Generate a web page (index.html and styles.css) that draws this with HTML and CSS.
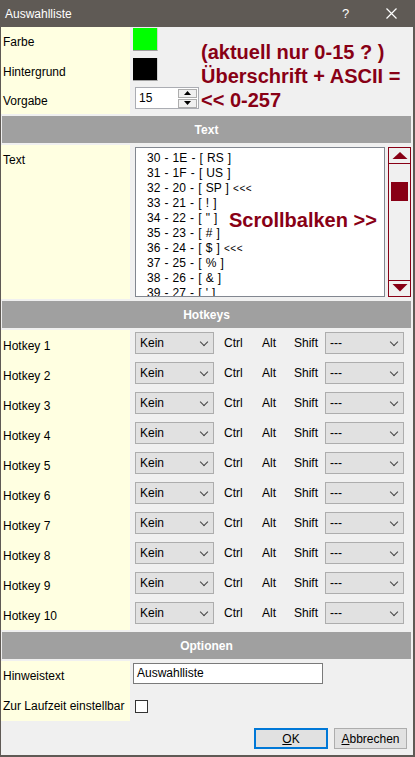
FILE: index.html
```html
<!DOCTYPE html>
<html>
<head>
<meta charset="utf-8">
<link rel="stylesheet" href="styles.css">
</head>
<body>
<div class="window">
  <div class="titlebar">
    <span class="title">Auswahlliste</span>
    <span class="help">?</span>
    <svg class="close" width="11" height="11" viewBox="0 0 11 11"><path d="M0.5 0.5 L10.5 10.5 M10.5 0.5 L0.5 10.5" stroke="#fff" stroke-width="1.2" fill="none"/></svg>
  </div>
  <div class="content">
    <div class="row r30">
      <div class="lbl">Farbe</div>
      <div class="val top"><div class="swatch green"></div></div>
    </div>
    <div class="row r30">
      <div class="lbl">Hintergrund</div>
      <div class="val top"><div class="swatch black"></div></div>
    </div>
    <div class="row r27">
      <div class="lbl">Vorgabe</div>
      <div class="val top">
        <div class="spin">
          <span class="spin-val">15</span>
          <div class="spin-btns">
            <div class="spin-btn"><svg width="7" height="4" viewBox="0 0 7 4"><path d="M0 4 L3.5 0 L7 4 Z" fill="#000"/></svg></div>
            <div class="spin-btn"><svg width="7" height="4" viewBox="0 0 7 4"><path d="M0 0 L3.5 4 L7 0 Z" fill="#000"/></svg></div>
          </div>
        </div>
      </div>
    </div>

    <div class="section">Text</div>

    <div class="row rtext">
      <div class="lbl lbl-top">Text</div>
      <div class="val top">
        <div class="listbox">
          <div class="item">30 - 1E - [ RS ]</div>
          <div class="item">31 - 1F - [ US ]</div>
          <div class="item">32 - 20 - [ SP ] <span class="sm">&lt;&lt;&lt;</span></div>
          <div class="item">33 - 21 - [ ! ]</div>
          <div class="item">34 - 22 - [ " ]</div>
          <div class="item">35 - 23 - [ # ]</div>
          <div class="item">36 - 24 - [ $ ] <span class="sm">&lt;&lt;&lt;</span></div>
          <div class="item">37 - 25 - [ % ]</div>
          <div class="item">38 - 26 - [ &amp; ]</div>
          <div class="item">39 - 27 - [ ' ]</div>
        </div>
        <svg class="scrollbar" width="23" height="150" viewBox="0 0 23 150">
          <rect x="0.5" y="0.5" width="22" height="149" fill="#f0f0f0" stroke="#880015"/>
          <line x1="0" y1="16.5" x2="23" y2="16.5" stroke="#880015"/>
          <line x1="0" y1="133.5" x2="23" y2="133.5" stroke="#880015"/>
          <path d="M4.5 12 L19.5 12 L12 5 Z" fill="#880015"/>
          <path d="M4.5 137 L19.5 137 L12 144.5 Z" fill="#880015"/>
          <rect x="3" y="35" width="17" height="19" fill="#880015"/>
        </svg>
      </div>
    </div>

    <div class="section">Hotkeys</div>

    <div class="hotkeys">
      <div class="row hk"><div class="lbl">Hotkey 1</div><div class="val"><div class="combo">Kein</div><span class="mod ctrl">Ctrl</span><span class="mod alt">Alt</span><span class="mod shift">Shift</span><div class="combo">---</div></div></div>
      <div class="row hk"><div class="lbl">Hotkey 2</div><div class="val"><div class="combo">Kein</div><span class="mod ctrl">Ctrl</span><span class="mod alt">Alt</span><span class="mod shift">Shift</span><div class="combo">---</div></div></div>
      <div class="row hk"><div class="lbl">Hotkey 3</div><div class="val"><div class="combo">Kein</div><span class="mod ctrl">Ctrl</span><span class="mod alt">Alt</span><span class="mod shift">Shift</span><div class="combo">---</div></div></div>
      <div class="row hk"><div class="lbl">Hotkey 4</div><div class="val"><div class="combo">Kein</div><span class="mod ctrl">Ctrl</span><span class="mod alt">Alt</span><span class="mod shift">Shift</span><div class="combo">---</div></div></div>
      <div class="row hk"><div class="lbl">Hotkey 5</div><div class="val"><div class="combo">Kein</div><span class="mod ctrl">Ctrl</span><span class="mod alt">Alt</span><span class="mod shift">Shift</span><div class="combo">---</div></div></div>
      <div class="row hk"><div class="lbl">Hotkey 6</div><div class="val"><div class="combo">Kein</div><span class="mod ctrl">Ctrl</span><span class="mod alt">Alt</span><span class="mod shift">Shift</span><div class="combo">---</div></div></div>
      <div class="row hk"><div class="lbl">Hotkey 7</div><div class="val"><div class="combo">Kein</div><span class="mod ctrl">Ctrl</span><span class="mod alt">Alt</span><span class="mod shift">Shift</span><div class="combo">---</div></div></div>
      <div class="row hk"><div class="lbl">Hotkey 8</div><div class="val"><div class="combo">Kein</div><span class="mod ctrl">Ctrl</span><span class="mod alt">Alt</span><span class="mod shift">Shift</span><div class="combo">---</div></div></div>
      <div class="row hk"><div class="lbl">Hotkey 9</div><div class="val"><div class="combo">Kein</div><span class="mod ctrl">Ctrl</span><span class="mod alt">Alt</span><span class="mod shift">Shift</span><div class="combo">---</div></div></div>
      <div class="row hk"><div class="lbl">Hotkey 10</div><div class="val"><div class="combo">Kein</div><span class="mod ctrl">Ctrl</span><span class="mod alt">Alt</span><span class="mod shift">Shift</span><div class="combo">---</div></div></div>
    </div>

    <div class="section">Optionen</div>

    <div class="row r30">
      <div class="lbl">Hinweistext</div>
      <div class="val top"><div class="textinput">Auswahlliste</div></div>
    </div>
    <div class="row r30">
      <div class="lbl">Zur Laufzeit einstellbar</div>
      <div class="val"><div class="checkbox"></div></div>
    </div>
  </div>
  <div class="footer">
    <div class="btn btn-default"><u>O</u>K</div>
    <div class="btn"><u>A</u>bbrechen</div>
  </div>

  <div class="note note-top">(aktuell nur 0-15 ? )<br>Überschrift + ASCII =<br>&lt;&lt; 0-257</div>
  <div class="note note-scroll">Scrollbalken &gt;&gt;</div>
</div>
</body>
</html>
```

FILE: styles.css
```css
* { box-sizing: border-box; }
html, body { margin: 0; padding: 0; }
body {
  font-family: "Liberation Sans", Arial, sans-serif;
  font-size: 12px;
  color: #000;
  background: #fff;
}
.window {
  position: relative;
  width: 415px;
  height: 757px;
  background: #f0f0f0;
  border-left: 1px solid #5f5a55;
  border-right: 2px solid #5f5a55;
  border-bottom: 2px solid #5f5a55;
  display: flex;
  flex-direction: column;
  overflow: hidden;
}
.titlebar {
  height: 27px;
  flex: none;
  margin-left: -1px;
  margin-right: -2px;
  background: #5f5a55;
  color: #fff;
  display: flex;
  align-items: center;
  padding-left: 5px;
  font-size: 12px;
}
.title { flex: 1; }
.help { width: 6px; margin-right: 38px; font-size: 13px; }
.close { margin-right: 18px; display: block; }

.content { display: flex; flex-direction: column; }
.row { display: flex; }
.r30 { height: 30px; }
.r27 { height: 27px; }
.rtext { height: 154px; }
.lbl {
  width: 129px;
  flex: none;
  background: #ffffe1;
  padding-left: 2px;
  display: flex;
  align-items: center;
  white-space: nowrap;
}
.lbl-top { align-items: flex-start; padding-top: 8px; }
.val {
  flex: 1;
  display: flex;
  align-items: center;
  padding-left: 3px;
}
.val.top { align-items: flex-start; }

.swatch {
  width: 25px;
  height: 23px;
  margin-top: 1px;
  border-bottom: 1px solid #a0a0a0;
  border-right: 1px solid #d0d0d0;
}
.green { background: #00ff00; }
.black { background: #000; }

.spin {
  margin-left: 2px;
  width: 64px;
  height: 22px;
  background: #fff;
  border: 1px solid #abadb3;
  display: flex;
  align-items: center;
}
.spin-val { flex: 1; padding-left: 3px; }
.spin-btns {
  display: flex;
  flex-direction: column;
  gap: 1px;
  margin-right: 1px;
}
.spin-btn {
  width: 19px;
  height: 9px;
  background: #f0f0f0;
  border: 1px solid #adadad;
  display: flex;
  align-items: center;
  justify-content: center;
}
.spin-btn svg { display: block; }

.section {
  height: 27px;
  flex: none;
  margin: 2px 2px 2px 1px;
  background: #a0a0a0;
  color: #fff;
  font-weight: bold;
  display: flex;
  align-items: center;
  justify-content: center;
}

.listbox {
  margin-top: 2px;
  margin-left: 2px;
  width: 250px;
  height: 150px;
  background: #fff;
  border: 1px solid #828790;
  padding: 3px 0 0 11px;
  overflow: hidden;
}
.item {
  height: 15px;
  line-height: 15px;
  white-space: pre;
  word-spacing: 0.8px;
}
.sm { font-size: 10px; letter-spacing: 0.5px; }
.scrollbar { display: block; margin-top: 2px; margin-left: 3px; }

.hk { height: 30px; }
.hk .lbl { padding-top: 1px; }
.hk .val { align-items: flex-start; padding-top: 2px; padding-left: 5px; }
.combo {
  position: relative;
  width: 79px;
  height: 22px;
  background: #e1e1e1;
  border: 1px solid #adadad;
  padding-left: 4px;
  line-height: 20px;
  flex: none;
}
.combo::after {
  content: "";
  position: absolute;
  right: 6px;
  top: 6px;
  width: 5px;
  height: 5px;
  border-right: 1px solid #444;
  border-bottom: 1px solid #444;
  transform: rotate(45deg);
}
.mod { line-height: 22px; flex: none; }
.ctrl { width: 48px; padding-left: 10px; }
.alt { width: 32px; }
.shift { width: 31px; }

.textinput {
  margin-top: 2px;
  width: 190px;
  height: 21px;
  background: #fff;
  border: 1px solid #7a7a7a;
  padding-left: 3px;
  line-height: 19px;
}
.checkbox {
  margin-left: 2px;
  width: 13px;
  height: 13px;
  background: #fff;
  border: 1px solid #333;
}

.footer {
  flex: 1;
  display: flex;
  justify-content: flex-end;
  align-items: flex-start;
  gap: 6px;
  padding-top: 7px;
  padding-right: 6px;
}
.btn {
  width: 73px;
  height: 21px;
  background: #e1e1e1;
  border: 1px solid #adadad;
  display: flex;
  align-items: center;
  justify-content: center;
}
.btn-default {
  width: 74px;
  border: 2px solid #0078d7;
}

.note {
  position: absolute;
  color: #880015;
  font-family: "Liberation Sans", Arial, sans-serif;
  font-weight: bold;
  font-size: 20px;
  line-height: 24px;
  white-space: nowrap;
}
.note-top { left: 200px; top: 40px; }
.note-scroll { left: 228px; top: 208px; }
```
